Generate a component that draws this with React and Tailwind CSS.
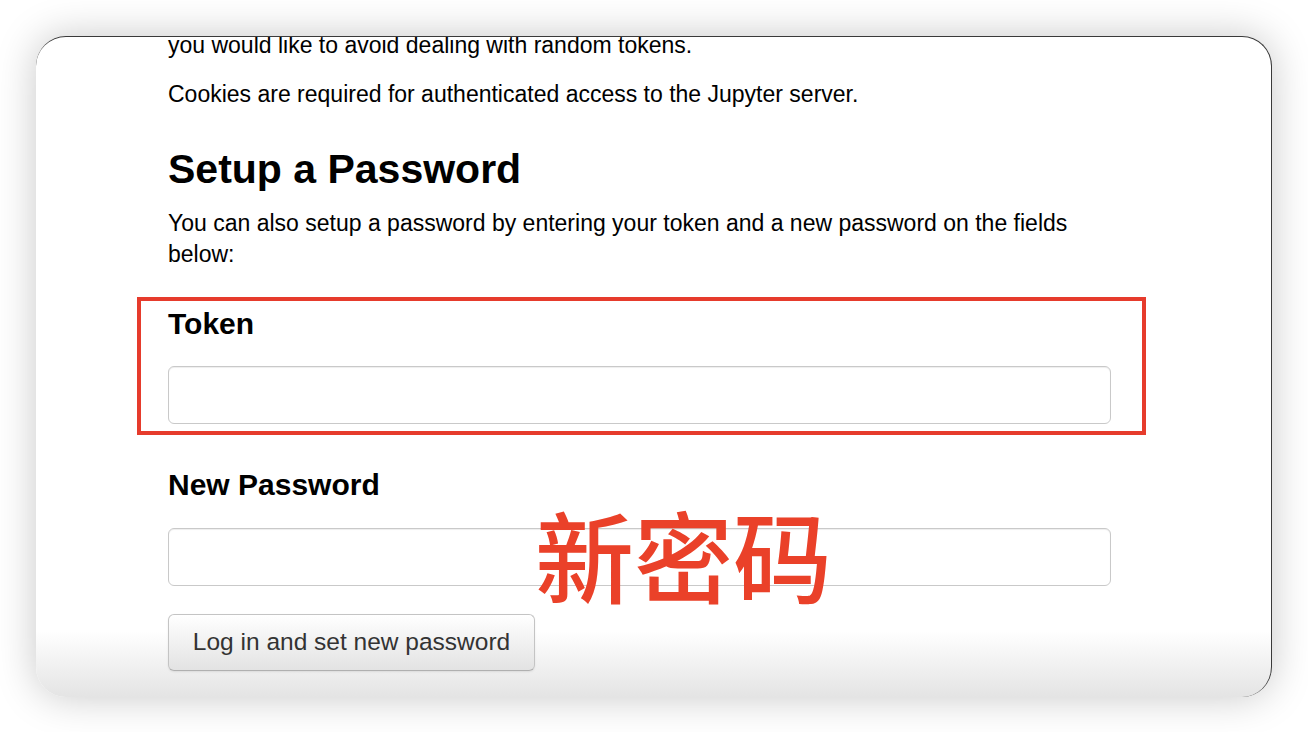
export default function App() {
  return (
    <div className="min-h-screen bg-white p-[36px]" style={{ fontFamily: '"Liberation Sans", Arial, sans-serif' }}>
      <Window />
    </div>
  );
}

function Window() {
  return (
    <div className="relative h-[661px] w-[1236px] overflow-hidden rounded-[30px] border-t border-r border-[#3a3a3a] bg-linear-to-b from-white from-90% to-[#e4e4e4] shadow-[0_0_40px_rgba(0,0,0,0.22)]">
      <div className="w-[943px] pl-[132px] box-content text-black">
        <p className="-mt-[7px] text-[23px] leading-[31px]">
          you would like to avoid dealing with random tokens.
        </p>
        <p className="mt-[18px] text-[23px] leading-[31px]">
          Cookies are required for authenticated access to the Jupyter server.
        </p>
        <h1 className="mt-[36px] text-[41px] leading-[46px] font-bold">Setup a Password</h1>
        <p className="mt-[16px] text-[23px] leading-[31px]">
          You can also setup a password by entering your token and a new password on the fields below:
        </p>

        <div className="mt-[27px] -ml-[31px] w-[1009px] border-4 border-[#e63b2c] pt-[5px] pr-[31px] pb-[7px] pl-[27px]">
          <Field label="Token" />
        </div>

        <div className="mt-[32px]">
          <Field label="New Password" gap />
        </div>

        <button className="mt-[28px] h-[57px] w-[367px] rounded-[6px] border border-[#c4c4c4] border-b-[#b0b0b0] bg-linear-to-b from-white to-[#e3e3e3] text-[24.5px] text-[#333] shadow-[0_1px_2px_rgba(0,0,0,0.08)]">
          Log in and set new password
        </button>
      </div>

      <div
        className="absolute left-[499px] top-[467px] text-[99px] leading-none font-medium text-[#ea4129]"
        style={{ fontFamily: '"Noto Sans CJK SC", sans-serif' }}
      >
        新密码
      </div>
    </div>
  );
}

function Field({ label, gap }) {
  return (
    <div>
      <label className="block text-[30px] leading-[36px] font-bold">{label}</label>
      <input
        type="text"
        className={`${gap ? "mt-[25px]" : "mt-[24px]"} block h-[58px] w-[943px] rounded-[6px] border-[1.5px] border-[#c9c9c9] bg-white shadow-[inset_0_1px_1px_rgba(0,0,0,0.07)] outline-none`}
      />
    </div>
  );
}
